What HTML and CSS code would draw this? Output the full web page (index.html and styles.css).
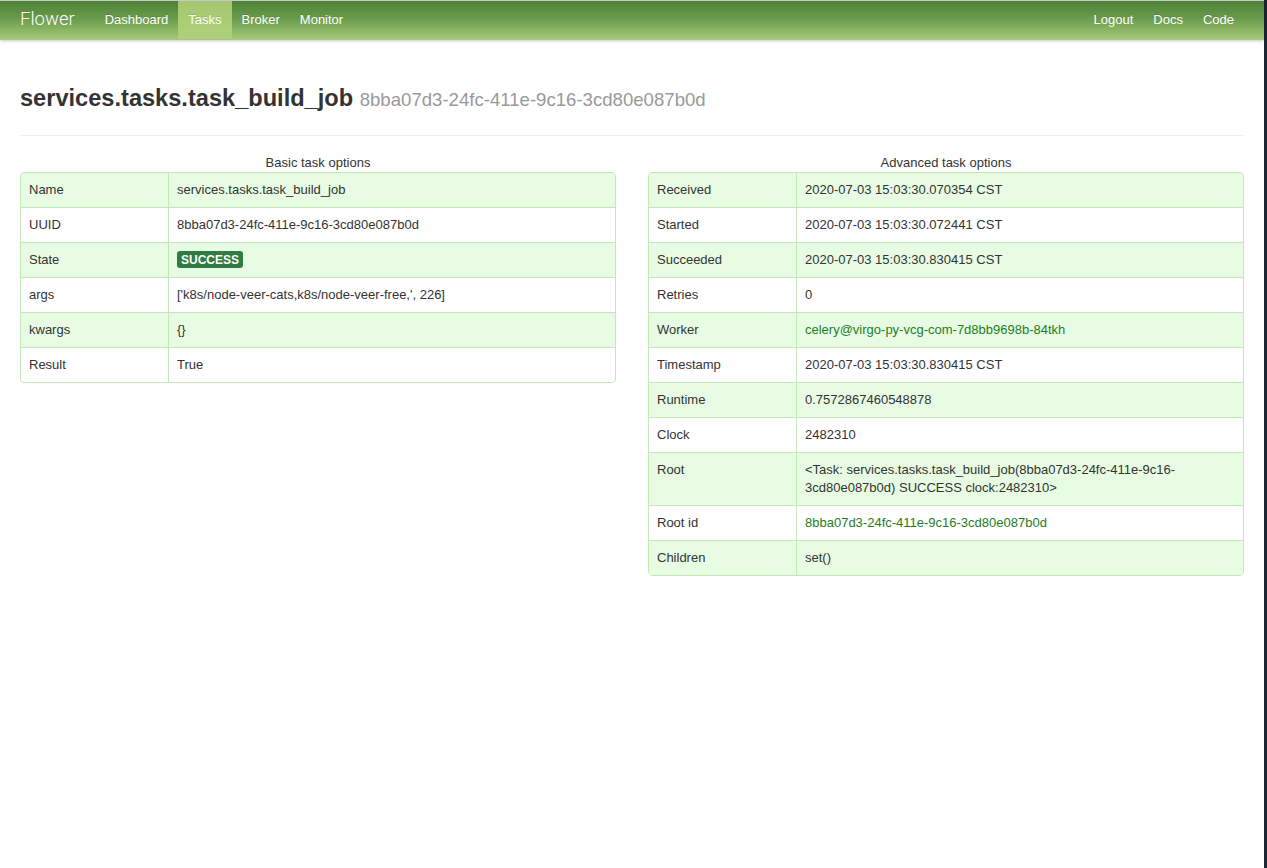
FILE: index.html
```html
<!DOCTYPE html>
<html>
<head>
<meta charset="utf-8">
<title>Flower</title>
<link rel="stylesheet" href="styles.css">
</head>
<body>
<div class="page">
  <div class="navbar">
    <div class="nav-inner">
      <a class="brand" href="#">Flower</a>
      <ul class="nav">
        <li><a href="#">Dashboard</a></li>
        <li class="active"><a href="#">Tasks</a></li>
        <li><a href="#">Broker</a></li>
        <li><a href="#">Monitor</a></li>
      </ul>
      <ul class="nav nav-right">
        <li><a href="#">Logout</a></li>
        <li><a href="#">Docs</a></li>
        <li><a href="#">Code</a></li>
      </ul>
    </div>
  </div>

  <div class="container">
    <div class="page-header">
      <h1>services.tasks.task_build_job <small>8bba07d3-24fc-411e-9c16-3cd80e087b0d</small></h1>
    </div>

    <div class="row">
      <div class="col">
        <table class="table">
          <caption>Basic task options</caption>
          <tbody>
            <tr><td class="key">Name</td><td>services.tasks.task_build_job</td></tr>
            <tr><td class="key">UUID</td><td>8bba07d3-24fc-411e-9c16-3cd80e087b0d</td></tr>
            <tr><td class="key">State</td><td><span class="label">SUCCESS</span></td></tr>
            <tr><td class="key">args</td><td>['k8s/node-veer-cats,k8s/node-veer-free,', 226]</td></tr>
            <tr><td class="key">kwargs</td><td>{}</td></tr>
            <tr><td class="key">Result</td><td>True</td></tr>
          </tbody>
        </table>
      </div>
      <div class="col">
        <table class="table">
          <caption>Advanced task options</caption>
          <tbody>
            <tr><td class="key">Received</td><td>2020-07-03 15:03:30.070354 CST</td></tr>
            <tr><td class="key">Started</td><td>2020-07-03 15:03:30.072441 CST</td></tr>
            <tr><td class="key">Succeeded</td><td>2020-07-03 15:03:30.830415 CST</td></tr>
            <tr><td class="key">Retries</td><td>0</td></tr>
            <tr><td class="key">Worker</td><td><a href="#">celery@virgo-py-vcg-com-7d8bb9698b-84tkh</a></td></tr>
            <tr><td class="key">Timestamp</td><td>2020-07-03 15:03:30.830415 CST</td></tr>
            <tr><td class="key">Runtime</td><td>0.7572867460548878</td></tr>
            <tr><td class="key">Clock</td><td>2482310</td></tr>
            <tr><td class="key">Root</td><td>&lt;Task: services.tasks.task_build_job(8bba07d3-24fc-411e-9c16-3cd80e087b0d) SUCCESS clock:2482310&gt;</td></tr>
            <tr><td class="key">Root id</td><td><a href="#">8bba07d3-24fc-411e-9c16-3cd80e087b0d</a></td></tr>
            <tr><td class="key">Children</td><td>set()</td></tr>
          </tbody>
        </table>
      </div>
    </div>
  </div>
</div>
</body>
</html>
```
FILE: styles.css
```css
html {
  margin: 0;
  background: #1c2733;
}
body {
  margin: 0;
  font-family: "Liberation Sans", Arial, sans-serif;
  font-size: 13px;
  line-height: 18px;
  color: #333;
}
.page {
  width: 1264px;
  min-height: 868px;
  background: #fff;
}
a {
  color: #1f7d1f;
  text-decoration: none;
}

/* navbar */
.navbar {
  height: 40px;
  border-top: 1px solid #c9c9c9;
  box-sizing: border-box;
  background: linear-gradient(to bottom, #4b8235 0%, #6a9b4c 45%, #a7cb77 100%);
  box-shadow: 0 1px 3px rgba(0, 0, 0, 0.22);
  position: relative;
}
.nav-inner {
  display: flex;
  align-items: stretch;
  height: 39px;
  padding: 0 20px;
}
.brand {
  color: #fff;
  font-family: Roboto, "Liberation Sans", sans-serif;
  font-weight: 300;
  font-size: 18.5px;
  line-height: 37px;
  margin-right: 20px;
}
.nav {
  list-style: none;
  margin: 0;
  padding: 0;
  display: flex;
}
.nav li a {
  display: block;
  color: #fff;
  padding: 0 10px;
  line-height: 38px;
  font-size: 13px;
  text-shadow: 0 -1px 0 rgba(0, 0, 0, 0.1);
}
.nav li.active a {
  background: linear-gradient(to bottom, #a4c76f, #aed27a);
}
.nav-right {
  margin-left: auto;
}

/* content */
.container {
  padding: 0 20px;
}
.page-header {
  margin-top: 40px;
  padding-bottom: 17px;
  border-bottom: 1px solid #eee;
}
h1 {
  margin: 0;
  font-size: 23.6px;
  line-height: 36px;
  font-weight: bold;
  color: #333;
}
h1 small {
  font-size: 18.6px;
  font-weight: normal;
  color: #999;
}
.row {
  display: grid;
  grid-template-columns: 596px 596px;
  column-gap: 32px;
  margin-top: 18px;
}
.table {
  width: 100%;
  border-collapse: separate;
  border-spacing: 0;
  border: 1px solid #c3e9ba;
  border-radius: 4px;
}
.table caption {
  line-height: 18px;
  color: #333;
}
.table td {
  padding: 8px;
  line-height: 18px;
  vertical-align: top;
  border-top: 1px solid #c3e9ba;
  text-align: left;
}
.table tr:first-child td {
  border-top: none;
}
.table td.key {
  width: 131px;
  border-right: 1px solid #c3e9ba;
}
.table tr:nth-child(odd) td {
  background: #e8fce4;
}
.table tr:first-child td:first-child { border-top-left-radius: 3px; }
.table tr:first-child td:last-child { border-top-right-radius: 3px; }
.table tr:last-child td:first-child { border-bottom-left-radius: 3px; }
.table tr:last-child td:last-child { border-bottom-right-radius: 3px; }

.label {
  display: inline-block;
  background: #2f7d42;
  color: #fff;
  font-weight: bold;
  font-size: 12px;
  line-height: 14px;
  padding: 2px 4px 1px;
  border-radius: 3px;
  vertical-align: baseline;
}
```
